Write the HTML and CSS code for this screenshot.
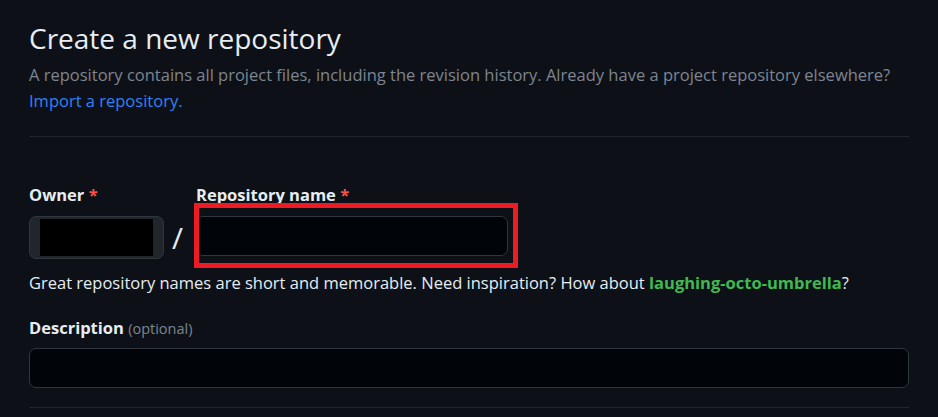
FILE: index.html
```html
<!DOCTYPE html>
<html lang="en">
<head>
<meta charset="utf-8">
<title>Create a new repository</title>
<link rel="stylesheet" href="styles.css">
</head>
<body>
<main class="page">
  <header class="head">
    <h1 class="title">Create a new repository</h1>
    <p class="lead">A repository contains all project files, including the revision history. Already have a project repository elsewhere?<br><a class="link" href="#">Import a repository.</a></p>
  </header>
  <hr class="rule rule-top">
  <div class="owner-row">
    <div class="field owner-field">
      <label class="label">Owner <span class="req">*</span></label>
      <div class="owner-btn"><span class="redact"></span></div>
    </div>
    <span class="slash">/</span>
    <div class="field name-field">
      <label class="label">Repository name <span class="req">*</span></label>
      <div class="name-wrap">
        <div class="input name-input"></div>
        <span class="highlight"></span>
      </div>
    </div>
  </div>
  <p class="hint">Great repository names are short and memorable. Need inspiration? How about <strong class="suggest">laughing-octo-umbrella</strong>?</p>
  <div class="field desc-field">
    <label class="label">Description <span class="opt">(optional)</span></label>
    <div class="input desc-input"></div>
  </div>
  <hr class="rule rule-bottom">
</main>
</body>
</html>
```

FILE: styles.css
```css
html, body {
  margin: 0;
  padding: 0;
  background: #0d1117;
}
body {
  font-family: "Open Sans", "Noto Sans", "Liberation Sans", sans-serif;
  color: #e6edf3;
  font-size: 16.5px;
}
.page {
  width: 880px;
  padding: 21px 0 0 29px;
  display: flex;
  flex-direction: column;
}
.title {
  margin: 0;
  font-size: 28px;
  line-height: 35px;
  font-weight: 400;
  color: #e6edf3;
}
.lead {
  margin: 6px 0 0;
  line-height: 26px;
  color: #7d8590;
}
.link {
  color: #2f81f7;
  text-decoration: none;
}
.rule {
  margin: 0;
  border: 0;
  height: 1px;
  background: #21262d;
}
.rule-top { margin-top: 22px; }
.rule-bottom { margin-top: 19px; }
.owner-row {
  display: flex;
  align-items: flex-start;
  margin-top: 47px;
}
.field {
  display: flex;
  flex-direction: column;
}
.label {
  font-weight: 700;
  line-height: 22px;
  margin-bottom: 10px;
  color: #e6edf3;
}
.req { color: #f85149; }
.owner-btn {
  width: 135px;
  height: 43px;
  box-sizing: border-box;
  background: #21262d;
  border: 1px solid #30363d;
  border-radius: 7px;
  display: flex;
  align-items: center;
  justify-content: center;
}
.redact {
  width: 113px;
  height: 37px;
  background: #000;
}
.slash {
  font-size: 30px;
  line-height: 30px;
  margin: 39px 13px 0 8px;
  color: #e6edf3;
}
.name-wrap {
  position: relative;
}
.input {
  box-sizing: border-box;
  height: 40px;
  background: #010409;
  border: 1px solid #30363d;
  border-radius: 7px;
}
.name-input { width: 312px; }
.highlight {
  position: absolute;
  left: -2px;
  top: -13px;
  width: 324px;
  height: 65px;
  box-sizing: border-box;
  border: 5px solid #ed1c24;
}
.hint {
  margin: 11px 0 0;
  line-height: 26px;
  color: #e6edf3;
}
.suggest {
  color: #3fb950;
  font-weight: 700;
}
.desc-field { margin-top: 21px; }
.desc-field .label { margin-bottom: 8px; }
.opt {
  font-size: 14.5px;
  font-weight: 400;
  color: #7d8590;
}
.desc-input { width: 880px; }
```
